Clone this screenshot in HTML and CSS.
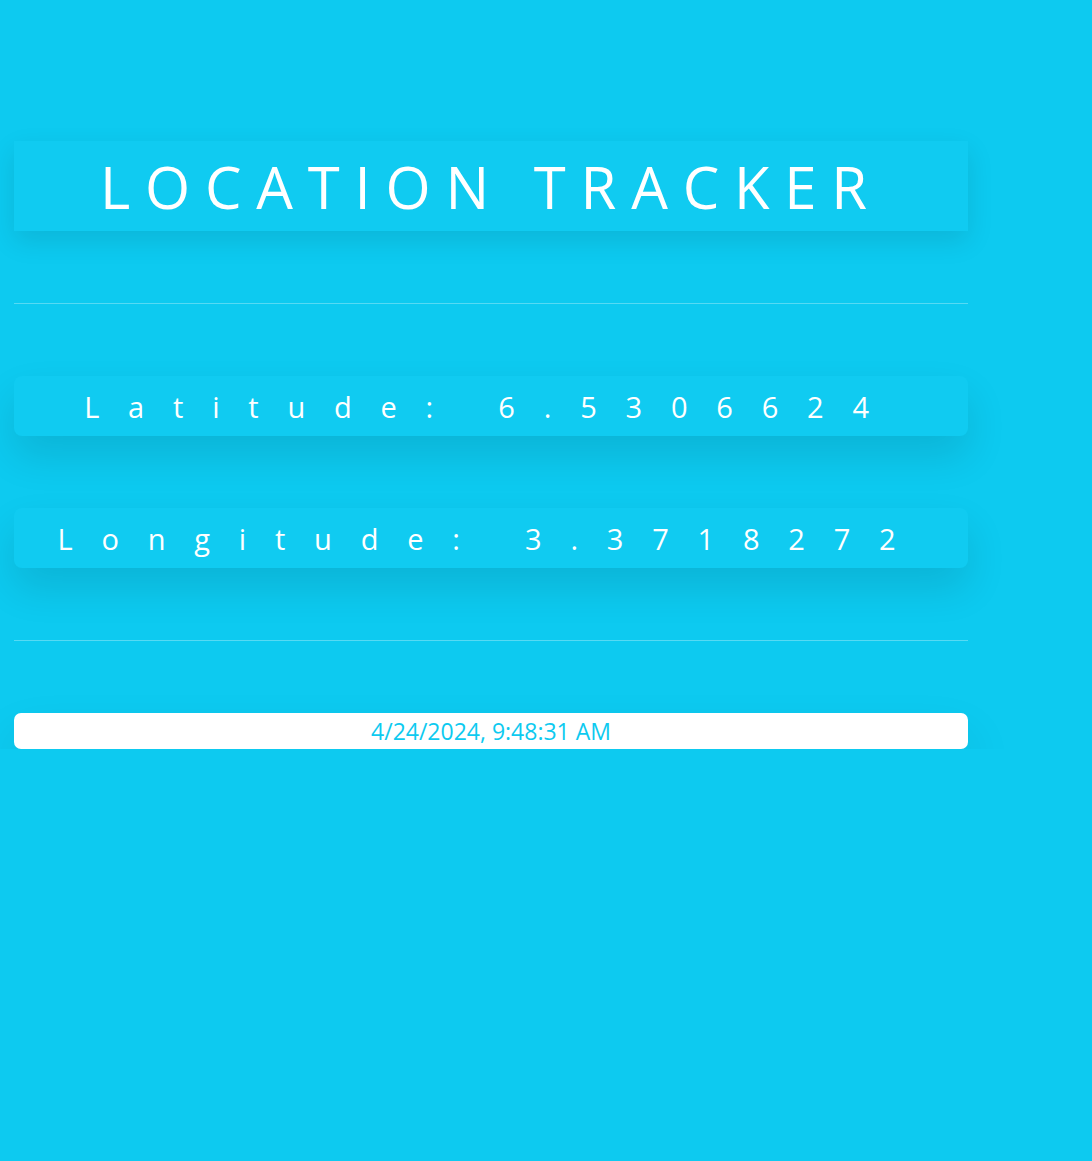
FILE: index.html
```
<!DOCTYPE html>
<html>
<head>
<meta charset="utf-8">
<title>Location Tracker</title>
<link rel="stylesheet" href="styles.css">
</head>
<body>
<main class="tracker">
  <h1 class="title">LOCATION TRACKER</h1>
  <hr class="rule">
  <div class="coord">Latitude: 6.5306624</div>
  <div class="coord">Longitude: 3.3718272</div>
  <hr class="rule">
  <div class="stamp">4/24/2024, 9:48:31 AM</div>
</main>
</body>
</html>
```
FILE: styles.css
```
html, body {
  margin: 0;
  padding: 0;
  background: #0dcaf0;
  min-height: 100%;
}
body {
  font-family: "Open Sans", "Noto Sans", sans-serif;
  color: #fff;
}
.tracker {
  width: 954px;
  margin-left: 14px;
  padding-top: 141px;
  display: flex;
  flex-direction: column;
  gap: 72px;
}
.title {
  margin: 0;
  height: 90px;
  display: flex;
  align-items: center;
  justify-content: center;
  font-size: 58px;
  font-weight: 400;
  letter-spacing: 14.8px;
  background: #10cbf1;
  box-shadow: 0 10px 25px rgba(0, 0, 0, 0.1);
}
.rule {
  margin: 0;
  border: 0;
  height: 1px;
  background: rgba(255, 255, 255, 0.3);
}
.coord {
  height: 60px;
  border-radius: 8px;
  display: flex;
  align-items: center;
  justify-content: center;
  font-size: 29px;
  letter-spacing: 28.8px;
  background: #10cbf1;
  box-shadow: 0 20px 40px rgba(0, 0, 0, 0.11);
}
.stamp {
  height: 36px;
  border-radius: 7px;
  background: #fff;
  color: #0dcaf0;
  font-size: 23px;
  display: flex;
  align-items: center;
  justify-content: center;
  box-shadow: 0 25px 50px rgba(0, 0, 0, 0.1);
}
```
